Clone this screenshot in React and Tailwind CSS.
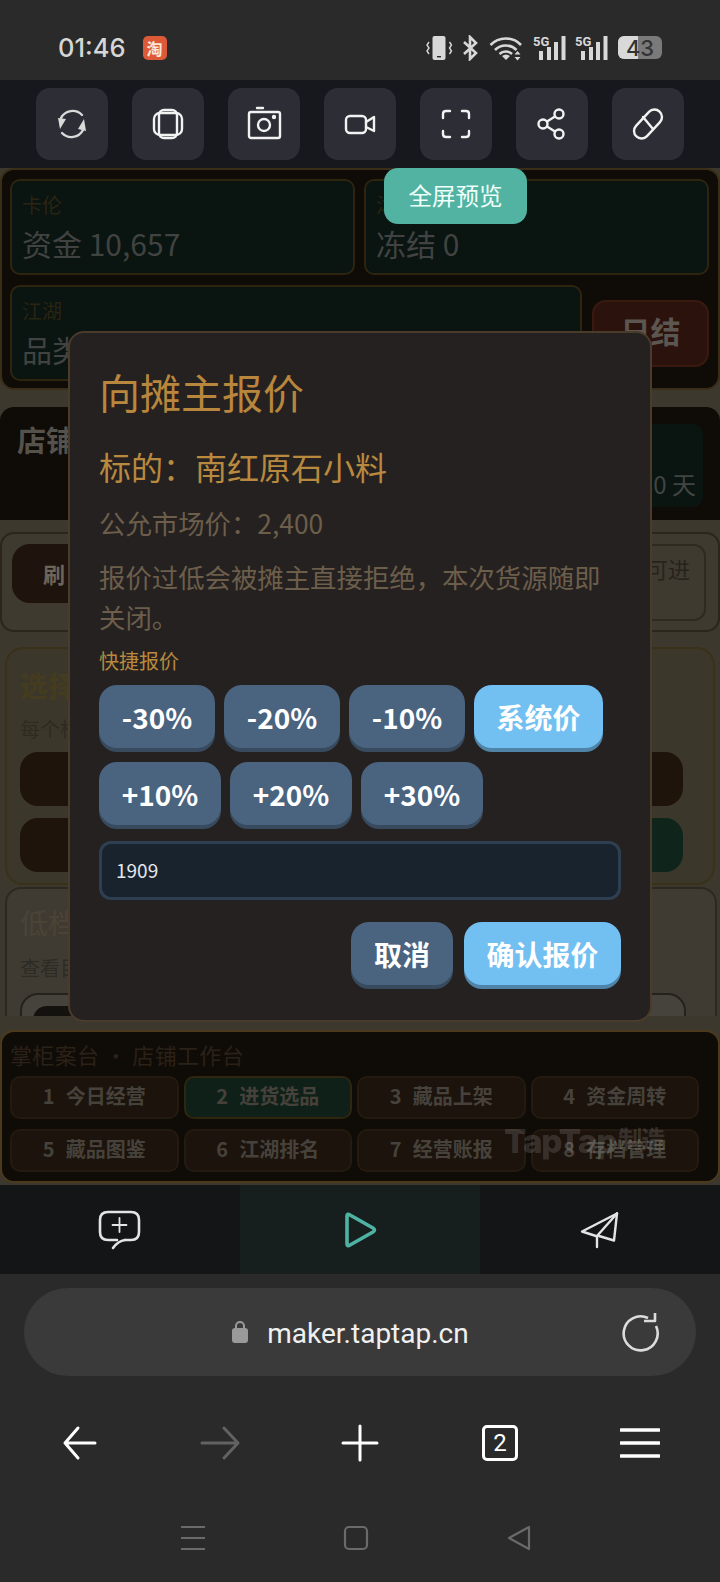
const CJK = "font-['Noto_Sans_CJK_SC','Noto_Sans',sans-serif]";

const workItems = [
  ["1", "今日经营"],
  ["2", "进货选品"],
  ["3", "藏品上架"],
  ["4", "资金周转"],
  ["5", "藏品图鉴"],
  ["6", "江湖排名"],
  ["7", "经营账报"],
  ["8", "存档管理"],
];

function ToolIcon({ children }) {
  return (
    <button className="flex h-[72px] w-[72px] items-center justify-center rounded-[14px] bg-[#2c2d35]">
      <svg width="40" height="40" viewBox="0 0 40 40" fill="none" stroke="#f2f2f2" strokeWidth="2.4" strokeLinecap="round" strokeLinejoin="round">
        {children}
      </svg>
    </button>
  );
}

function Toolbar() {
  return (
    <div className="flex h-[88px] items-center justify-between bg-[#16181e] px-[36px]">
      <ToolIcon>
        <path d="M9 14 A13 13 0 0 1 30 11" stroke="#d9d9d9" />
        <path d="M31 26 A13 13 0 0 1 10 29" stroke="#d9d9d9" />
        <path d="M6 14 L14 15 L8 25 Z" fill="#d9d9d9" stroke="none" />
        <path d="M34 27 L26 25 L32 15 Z" fill="#d9d9d9" stroke="none" />
      </ToolIcon>
      <ToolIcon>
        <rect x="6" y="9" width="28" height="22" rx="6" />
        <rect x="11" y="6" width="18" height="28" rx="5" />
      </ToolIcon>
      <ToolIcon>
        <rect x="5" y="8" width="31" height="26" rx="2" />
        <circle cx="20" cy="21" r="6" />
        <path d="M13 4 H19" />
        <circle cx="30" cy="13" r="1" fill="#f2f2f2" />
      </ToolIcon>
      <ToolIcon>
        <rect x="6" y="12" width="20" height="17" rx="4" />
        <path d="M26 18 L34 13 V27 L26 23" />
      </ToolIcon>
      <ToolIcon>
        <path d="M7 14 V10 Q7 7 10 7 H14" />
        <path d="M26 7 H30 Q33 7 33 10 V14" />
        <path d="M33 27 V30 Q33 33 30 33 H26" />
        <path d="M14 33 H10 Q7 33 7 30 V27" />
      </ToolIcon>
      <ToolIcon>
        <circle cx="27" cy="10" r="4.5" />
        <circle cx="11" cy="20" r="4.5" />
        <circle cx="27" cy="30" r="4.5" />
        <path d="M15 17.5 L23 12.5 M15 22.5 L23 27.5" />
      </ToolIcon>
      <ToolIcon>
        <rect x="12.5" y="3" width="15" height="34" rx="7.5" transform="rotate(43 20 20)" />
        <path d="M15 13 L25 25" />
      </ToolIcon>
    </div>
  );
}

function StatusBar() {
  return (
    <div className="flex h-[80px] items-center bg-[#2a2a2a] pl-[58px] pr-[58px] pt-[15px]">
      <span className="font-['Inter',sans-serif] text-[25.5px] font-medium leading-none text-[#d6d6d6]">01:46</span>
      <span className={`${CJK} ml-[17px] flex h-[24px] w-[24px] items-center justify-center rounded-[5px] bg-[#dd5a38] text-[16px] font-bold leading-none text-[#fbe6d8]`}>淘</span>
      <div className="ml-auto flex items-center">
        <svg width="27" height="26" viewBox="0 0 27 26" fill="#d8d8d8">
          <rect x="6.5" y="1" width="13" height="24" rx="2" />
          <rect x="11" y="21" width="4" height="1.4" fill="#2a2a2a" />
          <path d="M3 7 L1 10 L3 13 L1 16 L3 19 M23.5 7 L25.5 10 L23.5 13 L25.5 16 L23.5 19" fill="none" stroke="#d8d8d8" strokeWidth="1.4" />
        </svg>
        <svg className="ml-[9px]" width="16" height="26" viewBox="0 0 16 26" fill="none" stroke="#d8d8d8" strokeWidth="2.6">
          <path d="M2 7 L14 18 L8 24 V2 L14 8 L2 19" />
        </svg>
        <svg className="ml-[11px]" width="35" height="26" viewBox="0 0 35 26" fill="none" stroke="#d8d8d8" strokeWidth="2.6">
          <path d="M1.5 10 A21 21 0 0 1 32 10" />
          <path d="M6 15 A15 15 0 0 1 27.5 15" />
          <path d="M10.5 19 A9 9 0 0 1 23 19" />
          <path d="M13 21 L17 25 L21 21 Q17 18 13 21 Z" fill="#d8d8d8" stroke="none" />
          <path d="M25.5 19.5 L28.5 16 L31.5 19.5 Z M25.5 22 L28.5 25.5 L31.5 22 Z" fill="#d8d8d8" stroke="none" />
        </svg>
        <Signal className="ml-[9px]" />
        <Signal className="ml-[9px]" />
        <div className="relative ml-[10px] flex h-[23px] w-[44px] items-center justify-center overflow-hidden rounded-[6px] bg-[#7a7a7a]">
          <div className="absolute inset-y-0 left-0 w-[20px] bg-[#d9d9d9]" />
          <span className="relative font-['Inter',sans-serif] text-[22px] font-medium leading-none text-[#333]">43</span>
        </div>
      </div>
    </div>
  );
}

function Signal({ className }) {
  return (
    <svg className={className} width="33" height="26" viewBox="0 0 33 26" fill="#d8d8d8">
      <text x="0" y="11" fontFamily="Roboto, sans-serif" fontWeight="700" fontSize="13">5G</text>
      <rect x="6" y="16" width="4" height="9" />
      <rect x="14" y="12" width="4" height="13" />
      <rect x="21" y="7" width="4" height="18" />
      <rect x="28.5" y="1" width="4" height="24" />
    </svg>
  );
}

function StatCard({ label, value, className }) {
  return (
    <div className={`h-[96px] rounded-[10px] border-2 border-[#2e2410] bg-[#0a1410] pl-[10px] pt-[10px] ${className}`}>
      <div className="text-[20px] leading-[28px] text-[#2a2412]">{label}</div>
      <div className="mt-[4px] text-[30px] leading-[40px] text-[#404341]">{value}</div>
    </div>
  );
}

// what sits dimmed behind the dialog
function GameArea() {
  return (
    <div className="h-[848px] overflow-hidden bg-[#3d382e]">
      <div className="h-[222px] rounded-[14px] border-2 border-[#3b2e18] bg-[#0f0b07] px-[8px] pt-[9px]">
        <div className="flex gap-[9px]">
          <StatCard label="卡伦" value="资金 10,657" className="w-[345px]" />
          <StatCard label="沐" value="冻结 0" className="w-[345px]" />
        </div>
        <div className="mt-[10px] flex items-center gap-[10px]">
          <StatCard label="江湖" value="品类" className="w-[572px]" />
          <div className="flex h-[67px] w-[117px] items-center justify-center rounded-[14px] border-2 border-[#3a1a10] bg-[#2b120c] pb-[5px] text-[30px] font-bold text-[#5b5650]">日结</div>
        </div>
      </div>

      <div className="mt-[17px] flex h-[113px] items-start justify-between rounded-t-[14px] bg-[#0f0b07] pl-[17px] pr-[17px] pt-[13px]">
        <div className="text-[29px] font-bold leading-[38px] text-[#55514b]">店铺</div>
        <div className="mt-[4px] flex h-[83px] w-[150px] items-end justify-end rounded-[10px] bg-[#0a1410] pb-[6px] pr-[7px] pt-[3px] text-[24px] leading-[34px] text-[#414543]">30 天</div>
      </div>

      <div className="mt-[12px] flex h-[100px] items-start justify-between rounded-[14px] border-2 border-[#2b251b] bg-[#3f3a30] pl-[10px] pr-[12px] pt-[10px]">
        <div className="flex h-[59px] w-[200px] items-center rounded-[18px] bg-[#1f140d] pl-[31px] text-[22px] font-bold text-[#6c655a]">刷</div>
        <div className="flex h-[77px] w-[200px] justify-end rounded-[12px] border-2 border-[#302a1e] pr-[14px] pt-[6px] text-[22px] leading-[32px] text-[#26231d]">可进</div>
      </div>

      <div className="mx-[5px] mt-[15px] h-[238px] rounded-[18px] border-2 border-[#3a3119] bg-[#3b372b] px-[13px] pt-[16px]">
        <div className="text-[28px] font-bold leading-[40px] text-[#453c20]">选择</div>
        <div className="mt-[10px] text-[20px] leading-[28px] text-[#2e2b21]">每个标的</div>
        <div className="mt-[9px] h-[54px] w-[663px] rounded-[18px] bg-[#1f140c]" />
        <div className="mt-[12px] flex h-[54px] w-[663px]">
          <div className="w-[330px] rounded-[18px] bg-[#1f140c]" />
          <div className="w-[333px] rounded-[18px] bg-[#0f241a]" />
        </div>
      </div>

      <div className="ml-[5px] mr-[3px] mt-[2px] h-[160px] rounded-t-[16px] border-2 border-[#2c2820] bg-[#3f3b33] px-[13px] pt-[13px]">
        <div className="text-[28px] leading-[40px] text-[#4b4436]">低档</div>
        <div className="mt-[12px] text-[20px] leading-[28px] text-[#2e2b23]">查看目</div>
        <div className="mt-[11px] h-[60px] w-[666px] rounded-t-[18px] border-2 border-[#26221b] bg-[#45433c] px-[11px] pt-[11px]">
          <div className="h-[40px] w-[120px] rounded-t-[14px] bg-[#14120f]" />
        </div>
      </div>
    </div>
  );
}

function Workbench() {
  return (
    <div className="relative mt-[14px] h-[153px] rounded-[14px] border-2 border-[#4b3a1c] bg-[#0f0b07] pl-[8px] pr-[19px] pt-[4px]">
      <div className="text-[22px] leading-[36px] tracking-[0.35px] text-[#2b2117]">掌柜案台 · 店铺工作台</div>
      <div className="mt-[4px] grid grid-cols-4 gap-x-[5px] gap-y-[10px]">
        {workItems.map(([n, name]) => (
          <div
            key={n}
            className={`flex h-[43px] items-center justify-center gap-[11px] rounded-[10px] border-2 pb-[3px] text-[20px] font-bold text-[#46423b] ${
              n === "2" ? "border-[#2f2610] bg-[#0e2018]" : "border-[#241a0f] bg-[#1b130c]"
            }`}
          >
            <span>{n}</span>
            <span>{name}</span>
          </div>
        ))}
      </div>
      <div className="pointer-events-none absolute left-[502px] top-[93px] flex items-start font-['Inter',sans-serif] text-[33px] font-extrabold leading-[32px] tracking-[-1px] text-white/15">
        TapTap
        <span className={`${CJK} ml-[2px] text-[24px] font-bold leading-[26px]`}>制造</span>
      </div>
    </div>
  );
}

function BottomTabs() {
  return (
    <div className="mt-[2px] grid h-[89px] grid-cols-3 bg-[#131517]">
      <div className="flex items-center justify-center">
        <svg width="44" height="40" viewBox="0 0 44 40" fill="none" stroke="#e4e4e4" strokeWidth="2.6" strokeLinecap="round" strokeLinejoin="round">
          <path d="M27 30 H33 Q41 30 41 22 V10 Q41 2 33 2 H10 Q2 2 2 10 V22 Q2 30 10 30 H19" />
          <path d="M27 30 Q20 31 15 38" />
          <path d="M21.5 8 V22 M14.5 15 H28.5" strokeWidth="1.8" />
        </svg>
      </div>
      <div className="flex items-center justify-center bg-[#161e1e]">
        <svg width="36" height="40" viewBox="0 0 36 40" fill="none" stroke="#4fb3a3" strokeWidth="3.6" strokeLinejoin="round">
          <path d="M5 6 Q5 3 8 5 L31 18 Q34 20 31 22 L8 35 Q5 37 5 34 Z" />
        </svg>
      </div>
      <div className="flex items-center justify-center">
        <svg width="40" height="40" viewBox="0 0 40 40" fill="none" stroke="#e4e4e4" strokeWidth="2.4" strokeLinejoin="round" strokeLinecap="round">
          <path d="M37 3.5 L2 21.5 L16 26" />
          <path d="M37 3.5 L34 30.5 L19 26" />
          <path d="M37 3.5 L17 26 V37" />
        </svg>
      </div>
    </div>
  );
}

function QuoteButton({ children, active, className }) {
  return (
    <button
      className={`flex h-[63px] items-center justify-center rounded-[18px] text-[28px] font-bold text-white ${
        active ? "bg-[#72bff2] shadow-[0_4px_0_#4f84a8]" : "bg-[#4a6480] shadow-[0_4px_0_#384a5e]"
      } ${className}`}
    >
      {children}
    </button>
  );
}

function QuoteDialog() {
  return (
    <div className="absolute left-[68px] top-[331px] h-[691px] w-[584px] rounded-[16px] border-2 border-[#4b3b2a] bg-[#252120] pl-[29px] pr-[29px] pt-[28px]">
      <h2 className="text-[41px] font-normal leading-[60px] text-[#b8863c]">向摊主报价</h2>
      <p className="mt-[22px] text-[32px] leading-[46px] text-[#b8893f]">{"标的\uFF1A南红原石小料"}</p>
      <p className="mt-[14px] text-[26.4px] leading-[40px] text-[#6c5e4b]">{"公允市场价\uFF1A2,400"}</p>
      <p className="mt-[14px] text-[26.4px] leading-[40px] text-[#6c5e4b]">{"报价过低会被摊主直接拒绝\uFF0C本次货源随即关闭\u3002"}</p>
      <p className="mt-[9px] text-[20px] leading-[30px] text-[#b8893f]">快捷报价</p>
      <div className="mt-[9px] flex gap-[9px]">
        <QuoteButton className="w-[116px]">-30%</QuoteButton>
        <QuoteButton className="w-[116px]">-20%</QuoteButton>
        <QuoteButton className="w-[116px]">-10%</QuoteButton>
        <QuoteButton active className="w-[129px]">系统价</QuoteButton>
      </div>
      <div className="mt-[14px] flex gap-[9px]">
        <QuoteButton className="w-[122px]">+10%</QuoteButton>
        <QuoteButton className="w-[122px]">+20%</QuoteButton>
        <QuoteButton className="w-[122px]">+30%</QuoteButton>
      </div>
      <div className="mt-[16px] flex h-[59px] w-[522px] items-center rounded-[12px] border-[3px] border-[#2f3f52] bg-[#19232e] pl-[14px] text-[19px] text-[#e5e7eb]">1909</div>
      <div className="mt-[22px] flex w-[522px] justify-end gap-[11px]">
        <QuoteButton className="w-[102px]">取消</QuoteButton>
        <QuoteButton active className="w-[157px]">确认报价</QuoteButton>
      </div>
    </div>
  );
}

function BrowserBar() {
  return (
    <div className="h-[308px] bg-[#2a2a2a] px-[24px] pt-[14px]">
      <div className="relative flex h-[88px] items-center justify-center rounded-full bg-[#3a3a3a] pr-[20px]">
        <svg className="mr-[18px]" width="18" height="24" viewBox="0 0 18 24" fill="#9a9a9a">
          <path d="M5 9 V6 A4 4 0 0 1 13 6 V9" fill="none" stroke="#9a9a9a" strokeWidth="2" />
          <rect x="1" y="8" width="16" height="15" rx="3" />
        </svg>
        <span className="pt-[3px] font-['Roboto',sans-serif] text-[28px] leading-none text-[#f0f0f0]">maker.taptap.cn</span>
        <svg className="absolute right-[36px] top-[24px]" width="40" height="40" viewBox="0 0 40 40" fill="none" stroke="#dcdcdc" strokeWidth="2.6" strokeLinejoin="round">
          <path d="M28 6 A17 17 0 1 0 36 14" />
          <path d="M24 9 L35 9 L35 1" />
        </svg>
      </div>

      <div className="-mx-[14px] mt-[47px] grid grid-cols-5 items-center">
        <div className="flex justify-center">
          <svg width="40" height="40" viewBox="0 0 40 40" fill="none" stroke="#fff" strokeWidth="3" strokeLinecap="round" strokeLinejoin="round">
            <path d="M35 20 H5 M18 5 L5 20 L18 35" />
          </svg>
        </div>
        <div className="flex justify-center">
          <svg width="40" height="40" viewBox="0 0 40 40" fill="none" stroke="#626262" strokeWidth="3" strokeLinecap="round" strokeLinejoin="round">
            <path d="M2 20 H38 M24 5 L38 20 L24 35" />
          </svg>
        </div>
        <div className="flex justify-center">
          <svg width="40" height="40" viewBox="0 0 40 40" fill="none" stroke="#fff" strokeWidth="3" strokeLinecap="round">
            <path d="M20 3 V37 M3 20 H37" />
          </svg>
        </div>
        <div className="flex justify-center">
          <div className="flex h-[36px] w-[36px] items-center justify-center rounded-[5px] border-[3px] border-white font-['Roboto',sans-serif] text-[24px] leading-none text-white">2</div>
        </div>
        <div className="flex justify-center">
          <svg width="40" height="40" viewBox="0 0 40 40" fill="none" stroke="#fff" strokeWidth="3.4" strokeLinecap="round">
            <path d="M1 7 H39 M1 20 H39 M1 33 H39" />
          </svg>
        </div>
      </div>

      <div className="mt-[62px] flex items-center justify-center gap-[137px] pr-[8px]">
        <svg width="26" height="26" viewBox="0 0 26 26" fill="none" stroke="#6a6a6a" strokeWidth="2.2">
          <path d="M1 2 H25 M1 13 H25 M1 24 H25" />
        </svg>
        <svg width="26" height="26" viewBox="0 0 26 26" fill="none" stroke="#6a6a6a" strokeWidth="2.2">
          <rect x="2" y="2" width="22" height="22" rx="4" />
        </svg>
        <svg width="26" height="26" viewBox="0 0 26 26" fill="none" stroke="#6a6a6a" strokeWidth="2.2" strokeLinejoin="round">
          <path d="M23 2 L3 13 L23 24 Z" />
        </svg>
      </div>
    </div>
  );
}

export default function App() {
  return (
    <div className={`${CJK} relative h-[1582px] w-[720px] overflow-hidden bg-[#3d382e]`}>
      <StatusBar />
      <Toolbar />
      <GameArea />
      <Workbench />
      <BottomTabs />
      <BrowserBar />

      <div className="absolute left-[384px] top-[168px] flex h-[56px] w-[143px] items-center justify-center rounded-[14px] bg-[#52b3a3] text-[23.5px] text-[#effffa]">
        全屏预览
      </div>
      <QuoteDialog />
    </div>
  );
}
